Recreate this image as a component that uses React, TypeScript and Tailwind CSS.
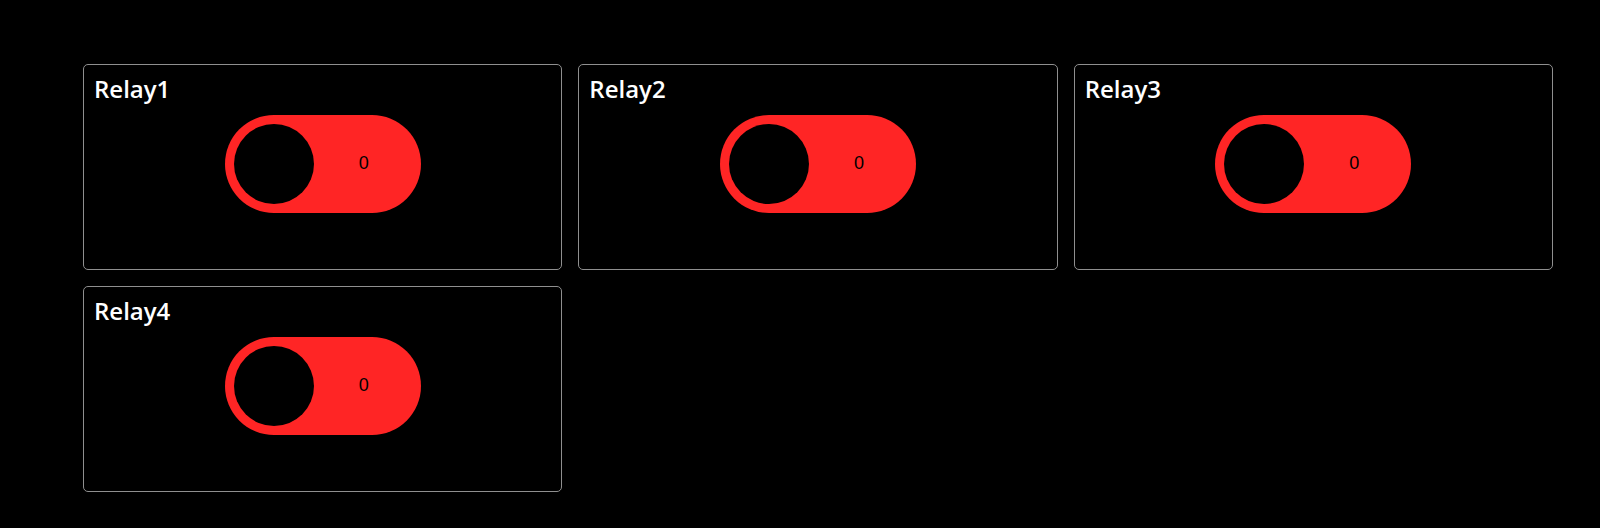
import React from "react";

function Toggle() {
  return (
    <div className="relative mx-auto mt-[12px] flex h-[98px] w-[196px] items-center rounded-full bg-[#ff2525] p-[9px]">
      <div className="h-[80px] w-[80px] rounded-full bg-black" />
      <span
        className="absolute left-[134px] top-[38px] text-[18px] leading-[20px] text-black"
        style={{ fontFamily: '"Liberation Sans", Arial, sans-serif' }}
      >
        0
      </span>
    </div>
  );
}

function Card({ title }: { title: string }) {
  return (
    <div className="h-[206px] rounded-[5px] border border-[#8f8f8f] bg-black px-[10px] pt-[10px]">
      <div
        className="h-[28px] text-[24px] font-semibold leading-[28px] text-white"
        style={{ fontFamily: '"Open Sans", sans-serif' }}
      >
        {title}
      </div>
      <Toggle />
    </div>
  );
}

export default function App() {
  return (
    <div className="min-h-[528px] w-full bg-black pl-[83px] pt-[64px]">
      <div className="grid w-[1470px] grid-cols-3 gap-4">
        <Card title="Relay1" />
        <Card title="Relay2" />
        <Card title="Relay3" />
        <Card title="Relay4" />
      </div>
    </div>
  );
}
